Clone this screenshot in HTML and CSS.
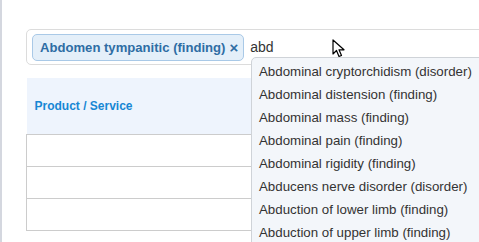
FILE: index.html
```html
<!DOCTYPE html>
<html lang="en">
<head>
    <meta charset="UTF-8">
    <title>Tag Input</title>
    <link rel="stylesheet" href="styles.css">
</head>
<body>
    <div class="page">
        <div class="tag-input">
            <span class="chip">Abdomen tympanitic (finding) <span class="chip-remove">&times;</span></span>
            <span class="typed">abd</span>
        </div>

        <table class="items">
            <thead>
                <tr><th>Product / Service</th></tr>
            </thead>
            <tbody>
                <tr><td></td></tr>
                <tr><td></td></tr>
                <tr><td></td></tr>
            </tbody>
        </table>

        <ul class="suggestions">
            <li>Abdominal cryptorchidism (disorder)</li>
            <li>Abdominal distension (finding)</li>
            <li>Abdominal mass (finding)</li>
            <li>Abdominal pain (finding)</li>
            <li>Abdominal rigidity (finding)</li>
            <li>Abducens nerve disorder (disorder)</li>
            <li>Abduction of lower limb (finding)</li>
            <li>Abduction of upper limb (finding)</li>
        </ul>

        <svg class="pointer" width="14" height="20" viewBox="0 0 14 20">
            <path d="M1 1 L1 15 L4.5 11.5 L7 17.5 L9.5 16.5 L7 10.8 L12 10.8 Z" fill="#fff" stroke="#000" stroke-width="1.2" stroke-linejoin="round"/>
        </svg>
    </div>
</body>
</html>
```

FILE: styles.css
```css
body {
    margin: 0;
    background-color: #ffffff;
    font-family: "Liberation Sans", Arial, sans-serif;
}

.page {
    position: relative;
    height: 242px;
    border-left: 2px solid #d4d7df;
    padding: 29px 0 0 24px;
    box-sizing: border-box;
    overflow: hidden;
}

.tag-input {
    display: flex;
    align-items: center;
    gap: 6px;
    height: 36px;
    margin-right: -10px;
    padding: 0 5px;
    border: 1px solid #dcdcdc;
    border-radius: 5px;
    box-sizing: border-box;
}

.chip {
    display: inline-flex;
    align-items: center;
    gap: 4px;
    height: 27px;
    padding: 0 5px 0 7px;
    background-color: #e4eff9;
    border: 1px solid #a9c9e7;
    border-radius: 5px;
    box-sizing: border-box;
    color: #2e6da4;
    font-size: 13.1px;
    font-weight: bold;
}

.chip-remove {
    font-size: 15px;
}

.typed {
    color: #333333;
    font-size: 14px;
}

.items {
    width: 100%;
    margin-top: 13px;
    border-collapse: collapse;
}

.items th {
    height: 56px;
    padding: 0 8px;
    background-color: #eef4fd;
    color: #1787d4;
    font-size: 12px;
    text-align: left;
}

.items td {
    height: 31px;
    padding: 0;
    border: 1px solid #cccccc;
}

.suggestions {
    position: absolute;
    left: 249px;
    top: 57px;
    right: -10px;
    margin: 0;
    padding: 2px 0 0 0;
    list-style: none;
    background-color: #f3f6fa;
    border: 1px solid #cfd3d8;
    border-radius: 5px 0 0 0;
}

.suggestions li {
    height: 23px;
    line-height: 23px;
    padding-left: 7px;
    color: #333333;
    font-size: 13.3px;
    white-space: nowrap;
}

.pointer {
    position: absolute;
    left: 330px;
    top: 39px;
}
```
